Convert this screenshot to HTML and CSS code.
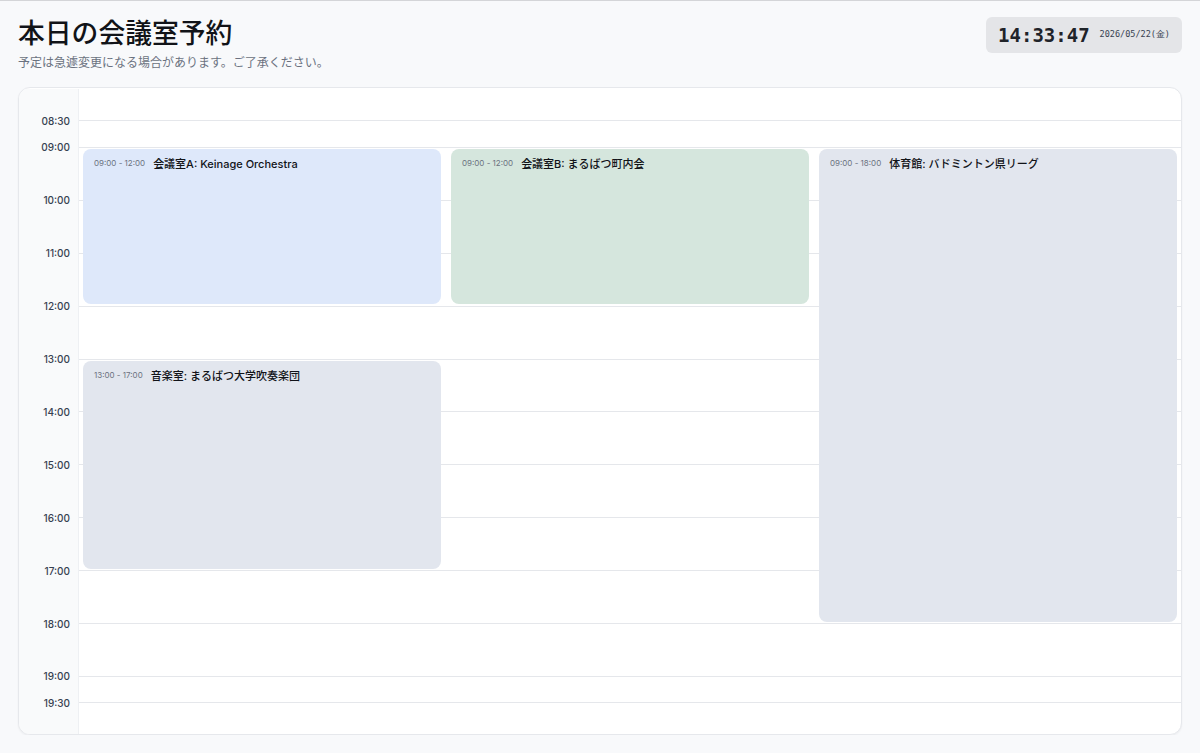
FILE: index.html
```html
<!DOCTYPE html>
<html lang="ja">
<head>
    <meta charset="UTF-8">
    <meta name="viewport" content="width=device-width, initial-scale=1.0">
    <title>本日の会議室予約</title>
    <link rel="stylesheet" href="styles.css">
</head>
<body>
    <header class="page-header">
        <div class="heading">
            <h1>本日の会議室予約</h1>
            <p class="notice">予定は急遽変更になる場合があります。ご了承ください。</p>
        </div>
        <div class="clock">
            <span class="clock-time">14:33:47</span>
            <span class="clock-date">2026/05/22(金)</span>
        </div>
    </header>

    <main class="schedule">
        <div class="time-axis">
            <span class="time-label" style="top: 31.95px">08:30</span>
            <span class="time-label" style="top: 58.4px">09:00</span>
            <span class="time-label" style="top: 111.3px">10:00</span>
            <span class="time-label" style="top: 164.2px">11:00</span>
            <span class="time-label" style="top: 217.1px">12:00</span>
            <span class="time-label" style="top: 270px">13:00</span>
            <span class="time-label" style="top: 322.9px">14:00</span>
            <span class="time-label" style="top: 375.8px">15:00</span>
            <span class="time-label" style="top: 428.7px">16:00</span>
            <span class="time-label" style="top: 481.6px">17:00</span>
            <span class="time-label" style="top: 534.5px">18:00</span>
            <span class="time-label" style="top: 587.4px">19:00</span>
            <span class="time-label" style="top: 613.85px">19:30</span>
        </div>

        <div class="board">
            <div class="grid-line" style="top: 31.95px"></div>
            <div class="grid-line" style="top: 58.4px"></div>
            <div class="grid-line" style="top: 111.3px"></div>
            <div class="grid-line" style="top: 164.2px"></div>
            <div class="grid-line" style="top: 217.1px"></div>
            <div class="grid-line" style="top: 270px"></div>
            <div class="grid-line" style="top: 322.9px"></div>
            <div class="grid-line" style="top: 375.8px"></div>
            <div class="grid-line" style="top: 428.7px"></div>
            <div class="grid-line" style="top: 481.6px"></div>
            <div class="grid-line" style="top: 534.5px"></div>
            <div class="grid-line" style="top: 587.4px"></div>
            <div class="grid-line" style="top: 613.85px"></div>

            <div class="lanes">
                <div class="lane">
                    <div class="event event-blue" style="top: 60px; height: 155px">
                        <span class="event-time">09:00 - 12:00</span>
                        <span class="event-title">会議室A: Keinage Orchestra</span>
                    </div>
                    <div class="event event-gray" style="top: 272px; height: 207.6px">
                        <span class="event-time">13:00 - 17:00</span>
                        <span class="event-title">音楽室: まるばつ大学吹奏楽団</span>
                    </div>
                </div>
                <div class="lane">
                    <div class="event event-green" style="top: 60px; height: 155px">
                        <span class="event-time">09:00 - 12:00</span>
                        <span class="event-title">会議室B: まるばつ町内会</span>
                    </div>
                </div>
                <div class="lane">
                    <div class="event event-gray" style="top: 60px; height: 472.5px">
                        <span class="event-time">09:00 - 18:00</span>
                        <span class="event-title">体育館: バドミントン県リーグ</span>
                    </div>
                </div>
            </div>
        </div>
    </main>
</body>
</html>
```

FILE: styles.css
```css
html {
    background: #f8f9fb;
}
body {
    margin: 0;
    padding: 16px 18px 0;
    border-top: 1px solid #d4d5d8;
    font-family: Inter, "Noto Sans CJK JP", sans-serif;
    color: #111827;
    background: #f8f9fb;
}
.page-header {
    display: flex;
    justify-content: space-between;
    align-items: flex-start;
    margin-bottom: 16px;
}
h1 {
    margin: 0;
    font-size: 26.8px;
    line-height: 32px;
    font-weight: 500;
    color: #111318;
}
.notice {
    margin: 6px 0 0;
    font-size: 12px;
    line-height: 16px;
    color: #6b7280;
}
.clock {
    display: flex;
    align-items: center;
    gap: 10px;
    height: 36px;
    padding: 0 12px;
    border-radius: 6px;
    background: #e4e5e8;
    color: #1f2329;
    font-family: "DejaVu Sans Mono", monospace;
}
.clock-time {
    font-size: 19px;
    font-weight: 700;
}
.clock-date {
    font-size: 8.5px;
    color: #374151;
}
.schedule {
    display: grid;
    grid-template-columns: 60px 1fr;
    height: 646px;
    background: #ffffff;
    border: 1px solid #e6e8ec;
    border-radius: 12px;
    box-shadow: 0 1px 2px rgba(15, 23, 42, 0.05);
    overflow: hidden;
}
.time-axis {
    position: relative;
    top: 1px;
    background: #f9fafb;
    border-right: 1px solid #eef0f3;
}
.time-label {
    position: absolute;
    right: 8px;
    transform: translateY(-50%);
    font-size: 10px;
    line-height: 12px;
    font-weight: 500;
    color: #374151;
}
.board {
    position: relative;
    top: 1px;
}
.grid-line {
    position: absolute;
    left: 0;
    right: 0;
    height: 1px;
    margin-top: -0.5px;
    background: #e5e7eb;
}
.lanes {
    position: absolute;
    inset: 0 4px;
    display: grid;
    grid-template-columns: repeat(3, 1fr);
    gap: 10px;
}
.lane {
    position: relative;
}
.event {
    position: absolute;
    left: 0;
    right: 0;
    box-sizing: border-box;
    display: flex;
    align-items: baseline;
    gap: 8px;
    padding: 8px 11px;
    border-radius: 8px;
}
.event-blue {
    background: #dee8fa;
}
.event-green {
    background: #d5e6dd;
}
.event-gray {
    background: #e2e6ee;
}
.event-time {
    font-size: 8px;
    color: #6b7280;
    position: relative;
    top: -2px;
}
.event-title {
    font-size: 11px;
    line-height: 15px;
    font-weight: 500;
    color: #111318;
}
```
